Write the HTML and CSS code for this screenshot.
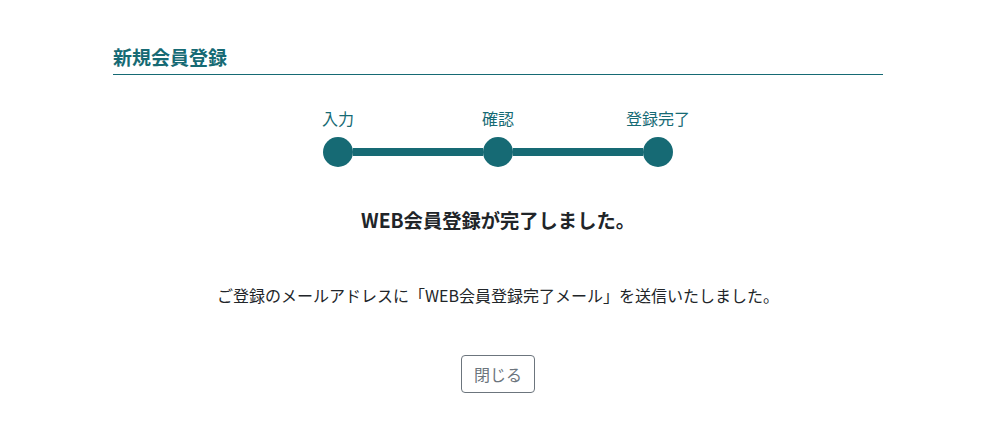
FILE: index.html
```html
<!DOCTYPE html>
<html lang="ja">
<head>
<meta charset="utf-8">
<title>新規会員登録</title>
<link rel="stylesheet" href="styles.css">
</head>
<body>
<main class="container">
  <h1 class="page-title">新規会員登録</h1>
  <div class="steps">
    <div class="step-labels">
      <span class="step-label">入力</span>
      <span class="step-label">確認</span>
      <span class="step-label">登録完了</span>
    </div>
    <div class="step-track">
      <span class="dot"></span>
      <span class="bar"></span>
      <span class="dot"></span>
      <span class="bar"></span>
      <span class="dot"></span>
    </div>
  </div>
  <h2 class="done-title">WEB会員登録が完了しました。</h2>
  <p class="done-text">ご登録のメールアドレスに「WEB会員登録完了メール」を送信いたしました。</p>
  <div class="actions">
    <button class="btn-close" type="button">閉じる</button>
  </div>
</main>
</body>
</html>
```
FILE: styles.css
```css
* { box-sizing: border-box; }
body {
  margin: 0;
  background: #fff;
  color: #212529;
  font-family: "Noto Sans CJK JP", "Noto Sans", sans-serif;
}
.container {
  width: 770px;
  margin: 0 auto;
  padding-top: 43px;
}
.page-title {
  margin: 0;
  font-size: 19px;
  line-height: 28px;
  font-weight: 700;
  color: #166a74;
  padding-bottom: 3px;
  border-bottom: 1px solid #166a74;
}
.steps {
  width: 350px;
  margin: 31px auto 0;
}
.step-labels {
  display: flex;
  justify-content: space-between;
}
.step-label {
  width: 30px;
  display: flex;
  justify-content: center;
  white-space: nowrap;
  font-size: 16px;
  line-height: 24px;
  color: #166a74;
}
.step-track {
  display: flex;
  align-items: center;
  margin-top: 7px;
}
.dot {
  width: 30px;
  height: 30px;
  border-radius: 50%;
  background: #166a74;
  flex: none;
}
.bar {
  flex: 1;
  height: 8px;
  background: #166a74;
}
.done-title {
  margin: 40px 0 0;
  text-align: center;
  font-size: 19.3px;
  line-height: 27px;
  font-weight: 700;
  color: #212529;
}
.done-text {
  margin: 49px 0 0;
  text-align: center;
  font-size: 16px;
  line-height: 24px;
}
.actions {
  margin-top: 48px;
  display: flex;
  justify-content: center;
}
.btn-close {
  font-family: inherit;
  font-size: 16px;
  line-height: 24px;
  padding: 6px 12px;
  color: #6c757d;
  background: #fff;
  border: 1px solid #6c757d;
  border-radius: 4px;
}
```
